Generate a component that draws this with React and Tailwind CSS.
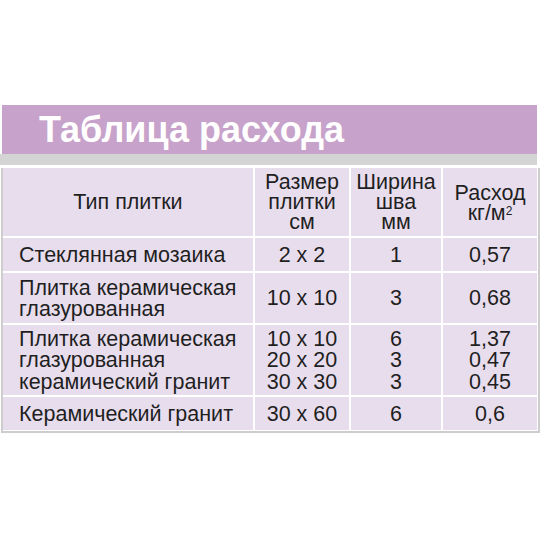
export default function App() {
  const font = { fontFamily: '"Liberation Sans", Arial, sans-serif' };
  const cell = "bg-[#e8dded] flex items-center justify-center text-center";
  const rows = [
    { h: "h-[33px]", a: ["Стеклянная мозаика"], b: ["2 x 2"], c: ["1"], d: ["0,57"] },
    { h: "h-[50px]", a: ["Плитка керамическая", "глазурованная"], b: ["10 x 10"], c: ["3"], d: ["0,68"] },
    {
      h: "h-[70px]",
      a: ["Плитка керамическая", "глазурованная", "керамический гранит"],
      b: ["10 x 10", "20 x 20", "30 x 30"],
      c: ["6", "3", "3"],
      d: ["1,37", "0,47", "0,45"],
    },
    { h: "h-[33px]", a: ["Керамический гранит"], b: ["30 x 60"], c: ["6"], d: ["0,6"] },
  ];
  const Lines = ({ items }) => (
    <div className="leading-[21.5px] pt-[2px]">
      {items.map((t, i) => (
        <div key={i}>{t}</div>
      ))}
    </div>
  );
  return (
    <div className="w-[543px] h-[543px] bg-white pt-[105px] text-[#1f1f1f]" style={font}>
      <div className="ml-[2px] w-[535px] h-[49px] bg-[#c7a2ca] flex items-center pl-[37px]">
        <span className="text-white font-bold text-[36px] leading-none">Таблица расхода</span>
      </div>
      <div className="w-[537px] h-[11px] bg-[#d4d4d4]" />
      <div className="pt-[3px]">
        <div className="ml-[1px] w-[539px] border-x-2 border-b-2 border-[#cdcdcd] bg-white pr-[1px] pb-[1px]">
          <div className="grid grid-cols-[250px_94px_90px_94px] gap-[2px] text-[21.5px]">
            <div className={`${cell} h-[68px]`}>Тип плитки</div>
            <div className={`${cell} h-[68px] leading-[20px]`}>
              <div>
                <div>Размер</div>
                <div>плитки</div>
                <div>см</div>
              </div>
            </div>
            <div className={`${cell} h-[68px] leading-[20px]`}>
              <div>
                <div>Ширина</div>
                <div>шва</div>
                <div>мм</div>
              </div>
            </div>
            <div className={`${cell} h-[68px] leading-[20px]`}>
              <div className="pt-[2px]">
                <div>Расход</div>
                <div>
                  кг/м<span className="text-[12px] align-top relative -top-[2px]">2</span>
                </div>
              </div>
            </div>
            {rows.map((r, i) => (
              <div key={i} className="contents">
                <div className={`bg-[#e8dded] flex items-center pl-[16px] ${r.h}`}>
                  <Lines items={r.a} />
                </div>
                <div className={`${cell} ${r.h}`}>
                  <Lines items={r.b} />
                </div>
                <div className={`${cell} ${r.h}`}>
                  <Lines items={r.c} />
                </div>
                <div className={`${cell} ${r.h}`}>
                  <Lines items={r.d} />
                </div>
              </div>
            ))}
          </div>
        </div>
      </div>
    </div>
  );
}
